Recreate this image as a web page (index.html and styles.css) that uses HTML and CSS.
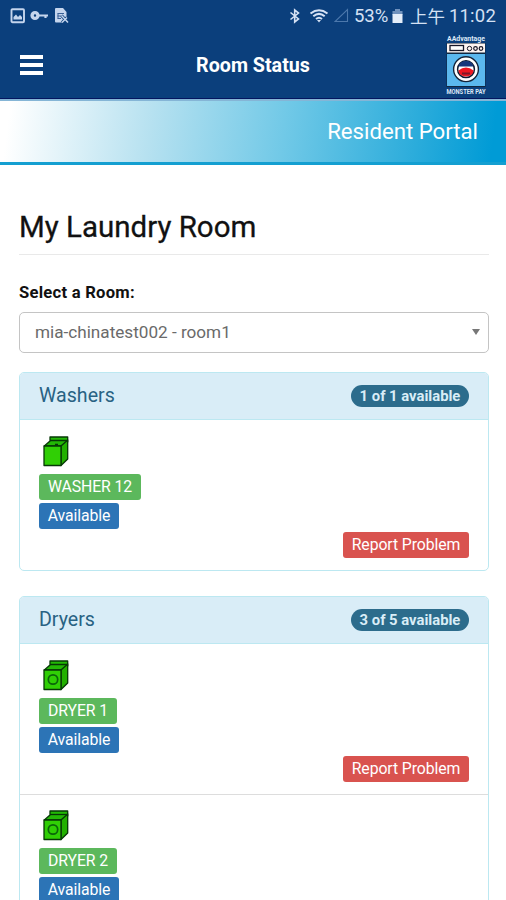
FILE: index.html
```html
<!DOCTYPE html>
<html lang="en">
<head>
<meta charset="utf-8">
<title>Room Status</title>
<link rel="stylesheet" href="styles.css">
</head>
<body>
<svg class="defs" width="0" height="0" aria-hidden="true">
  <defs>
    <g id="machine" stroke="#063806" stroke-width="1.3" stroke-linejoin="round">
      <path fill="#22b805" d="M7 2H24.700V7L18 11H1.300L7 6Z"/>
      <path fill="#22b000" d="M18 11L24.700 5V24L18 30.500Z"/>
      <path fill="#30cf05" d="M1 11H18V30.500H1Z"/>
      <path fill="none" d="M7 5.500H24"/>
    </g>
  </defs>
</svg>
<header class="top">
  <div class="status">
    <div class="status-left">
      <svg width="16" height="16" viewBox="0 0 16 16"><rect x="1.500" y="1.200" width="12.500" height="13" rx="1" fill="none" stroke="#c5d5ed" stroke-width="1.900"/><path fill="#c5d5ed" d="M3.500 11.500V9L6 6.500L8 9L10 7L12 9V11.500Z"/></svg>
      <svg width="20" height="16" viewBox="0 0 20 16"><circle cx="5" cy="7.500" r="2.900" fill="none" stroke="#c5d5ed" stroke-width="3.400"/><path d="M8 7.500H18M15.500 7.500V10" fill="none" stroke="#c5d5ed" stroke-width="2.200"/></svg>
      <svg width="16" height="17" viewBox="0 0 16 17"><path fill="#c5d5ed" d="M2 0H9L12.500 4V11L9 14.500H2Q1 14.500 1 13.500V1Q1 0 2 0Z"/><path d="M3.500 5.500H10M3.500 8H8M3.500 10.500H7M4 5.500V10.500" stroke="#385f96" fill="none"/><path d="M7.500 7.500L14 14.500M13 9.500L8 14.500" stroke="#0b3f7c" stroke-width="3"/><path d="M7.500 7.500L14 14.500M13 9.500L8 14.500" stroke="#c5d5ed" stroke-width="1.500"/></svg>
    </div>
    <div class="status-right">
      <svg class="bt" width="12" height="16" viewBox="0 0 12 16"><path d="M1.500 4.500L9.500 11L5.700 14V2L9.500 5L1.500 11.500" fill="none" stroke="#d5e1f4" stroke-width="1.600"/></svg>
      <svg class="wifi" width="20" height="16" viewBox="0 0 20 16"><path d="M1.500 5.500Q10-1 18.500 5.500M4.300 8.300Q10 3.500 15.700 8.300M7 11Q10 8.500 13 11" fill="none" stroke="#d5e1f4" stroke-width="2"/><path d="M8 12H12L10 14.500Z" fill="#d5e1f4"/></svg>
      <svg class="signal" width="15" height="16" viewBox="0 0 15 16"><path d="M1 13.500H13.500V1.500Z" fill="none" stroke="#4c78ac" stroke-width="1.100"/></svg>
      <span class="percent">53%</span>
      <svg class="battery" width="11" height="16" viewBox="0 0 11 16"><path fill="#6f91bd" d="M3 1H8V3H10.500V7H.5V3H3Z"/><path fill="#e4edf9" d="M.5 6H10.500V15H.5Z"/></svg>
      <span class="ampm">上午</span>
      <span class="clock">11:02</span>
    </div>
  </div>
  <div class="appbar">
    <div class="menu"><i></i><i></i><i></i></div>
    <h1>Room Status</h1>
    <div class="logo">
      <svg width="42" height="66" viewBox="0 0 42 66">
        <text x="21" y="8.500" text-anchor="middle" textLength="38" lengthAdjust="spacingAndGlyphs" class="logo-text">AAdvantage</text>
        <rect x="1.500" y="11" width="39" height="44" fill="#10263f"/>
        <rect x="2" y="11.500" width="38" height="9" fill="#fff5f2"/>
        <rect x="5" y="13.500" width="13.500" height="5" fill="#fff" stroke="#171727" stroke-width="1.300"/>
        <circle cx="24.500" cy="16.500" r="2.200" fill="none" stroke="#171727"/><circle cx="30.500" cy="16.500" r="1.800" fill="none" stroke="#171727" stroke-width="1.200"/><circle cx="36" cy="16.500" r="1.800" fill="none" stroke="#171727" stroke-width="1.200"/>
        <rect x="2" y="22" width="38" height="32" fill="#5bb8ee"/>
        <circle cx="21" cy="37.200" r="12.400" fill="#fff" stroke="#14243a" stroke-width="1.400"/>
        <circle cx="21" cy="37.200" r="8.400" fill="#fff" stroke="#101b31" stroke-width="1.500"/>
        <path d="M13.300 34.500A8.200 8.200 0 0 1 28.700 34.500Z" fill="#17377b"/>
        <path d="M13.400 38.500Q21 32.500 28.600 38.500Q28 44 21 44.500Q14 44 13.400 38.500Z" fill="#ee1721"/>
        <path d="M17 40.500H25V42.500H17Z" fill="#7d1727"/>
        <text x="21" y="62" text-anchor="middle" textLength="39" lengthAdjust="spacingAndGlyphs" class="logo-text pay">MONSTER PAY</text>
      </svg>
    </div>
  </div>
</header>
<div class="banner"><span>Resident Portal</span></div>
<main>
  <h2><span>My Laundry Room</span></h2>
  <div class="field-label"><span>Select a Room:</span></div>
  <div class="select"><span>mia-chinatest002 - room1</span><i class="arrow"></i></div>

  <section class="panel">
    <div class="panel-head"><span class="name">Washers</span><span class="badge">1 of 1 available</span></div>
    <div class="machine">
      <svg width="36" height="34" viewBox="-4 0 36 34"><use href="#machine"/><path d="M12 9.500H15" stroke="#063806" stroke-width="1.500"/></svg>
      <span class="tag green washer">WASHER 12</span>
      <span class="tag blue">Available</span>
      <span class="tag red">Report Problem</span>
    </div>
  </section>

  <section class="panel">
    <div class="panel-head"><span class="name">Dryers</span><span class="badge">3 of 5 available</span></div>
    <div class="machine">
      <svg width="36" height="34" viewBox="-4 0 36 34"><use href="#machine"/><circle cx="10" cy="20.500" r="4.700" fill="none" stroke="#0a650a" stroke-width="1.700"/></svg>
      <span class="tag green dryer">DRYER 1</span>
      <span class="tag blue">Available</span>
      <span class="tag red">Report Problem</span>
    </div>
    <div class="machine">
      <svg width="36" height="34" viewBox="-4 0 36 34"><use href="#machine"/><circle cx="10" cy="20.500" r="4.700" fill="none" stroke="#0a650a" stroke-width="1.700"/></svg>
      <span class="tag green dryer">DRYER 2</span>
      <span class="tag blue">Available</span>
    </div>
  </section>
</main>
</body>
</html>
```
FILE: styles.css
```css
* { box-sizing: border-box; }
html { height: 900px; overflow: hidden; }
body {
  margin: 0;
  height: 900px;
  overflow: hidden;
  background: #fff;
  font-family: Roboto, "Noto Sans CJK TC", sans-serif;
  color: #111;
}
svg { display: block; flex: none; }
.defs { position: absolute; }

.top {
  height: 99px;
  background: #0b3f7c;
  border-bottom: 1px solid #04155f;
}
.status {
  height: 32px;
  display: flex;
  justify-content: space-between;
  padding: 0 10px;
}
.status-left { display: flex; gap: 4px; padding-top: 8px; }
.status-right {
  display: flex;
  align-items: center;
  color: #d5e1f4;
  font-size: 18.500px;
  line-height: 32px;
  white-space: nowrap;
}
.bt { margin-right: 8px; }
.wifi { margin-right: 5px; }
.signal { margin-right: 5px; }
.percent { width: 37px; }
.battery { margin-right: 7px; margin-left: 1px; }
.ampm { font-family: "Noto Sans CJK TC", sans-serif; font-size: 17.500px; width: 39px; }
.clock { letter-spacing: .2px; }

.appbar {
  height: 66px;
  display: grid;
  grid-template-columns: 60px 1fr 61px;
  align-items: center;
}
.menu { display: flex; flex-direction: column; gap: 4px; padding: 0 0 3px 20px; }
.menu i { width: 23px; height: 4px; background: #fff; }
.appbar h1 {
  margin: 0;
  padding-left: 1px;
  text-align: center;
  color: #fff;
  font-size: 19.700px;
  line-height: 24px;
  font-weight: 700;
}
.logo { padding-bottom: 2px; }
.logo svg { overflow: visible; }
.logo-text { font-size: 6.500px; font-weight: 700; fill: #dce8f8; }
.logo-text.pay { font-size: 7.500px; }

.banner {
  height: 66px;
  border-top: 2px solid #85b5d6;
  border-bottom: 3px solid #149fd1;
  background: linear-gradient(97deg, #fff 2%, #b6e1f0 30%, #71c9e7 56%, #2bacdb 82%, #009bd6 97%);
  display: flex;
  align-items: center;
  justify-content: flex-end;
  padding: 0 28px 2px 0;
  color: #fff;
  font-size: 22.200px;
}

main { padding: 0 17px 0 19px; }
h2 {
  margin: 0;
  height: 90px;
  padding-top: 44px;
  border-bottom: 1px solid #e9e9e9;
  font-size: 29.500px;
  line-height: 36px;
  font-weight: 400;
  -webkit-text-stroke: .3px #111;
}
.field-label {
  height: 57px;
  padding-top: 27px;
  font-size: 16.600px;
  line-height: 21px;
  font-weight: 700;
  letter-spacing: .25px;
}
.select {
  height: 41px;
  border: 1px solid #c4c4c4;
  border-radius: 5px;
  display: flex;
  align-items: center;
  justify-content: space-between;
  padding: 0 8px 2px 15px;
  color: #6a6a6a;
  font-size: 17.150px;
}
.arrow {
  border: 4px solid transparent;
  border-top: 6px solid #777;
  border-bottom: 0;
}
.panel {
  margin-top: 19px;
  border: 1px solid #bce8f1;
  border-radius: 5px;
  overflow: hidden;
}
.panel + .panel { margin-top: 25px; }
.panel-head {
  height: 47px;
  display: flex;
  align-items: center;
  justify-content: space-between;
  padding: 0 19px;
  background: #d9edf7;
  border-bottom: 1px solid #bce8f1;
  color: #286283;
  font-size: 19.600px;
}
.name { padding-bottom: 1px; }
.badge {
  width: 118px;
  height: 22px;
  border-radius: 11px;
  background: #2c6c8c;
  color: #d9edf7;
  font-size: 14.800px;
  line-height: 22px;
  font-weight: 700;
  text-align: center;
  white-space: nowrap;
}
.machine {
  height: 150px;
  padding: 15px 19px 0 19px;
  display: flex;
  flex-direction: column;
  align-items: flex-start;
}
.machine + .machine { border-top: 1px solid #ddd; padding-top: 14px; }
.machine svg { margin-bottom: 5px; }
.tag {
  height: 26px;
  border-radius: 3px;
  color: #fff;
  font-size: 15.800px;
  letter-spacing: -.1px;
  line-height: 25px;
  text-align: center;
  white-space: nowrap;
  margin-bottom: 3px;
  flex: none;
}
.green { background: #5cb85c; }
.blue { background: #2c74b6; width: 80px; }
.red { background: #d9534f; width: 126px; align-self: flex-end; }
.washer { width: 102px; }
.dryer { width: 78px; }
```
